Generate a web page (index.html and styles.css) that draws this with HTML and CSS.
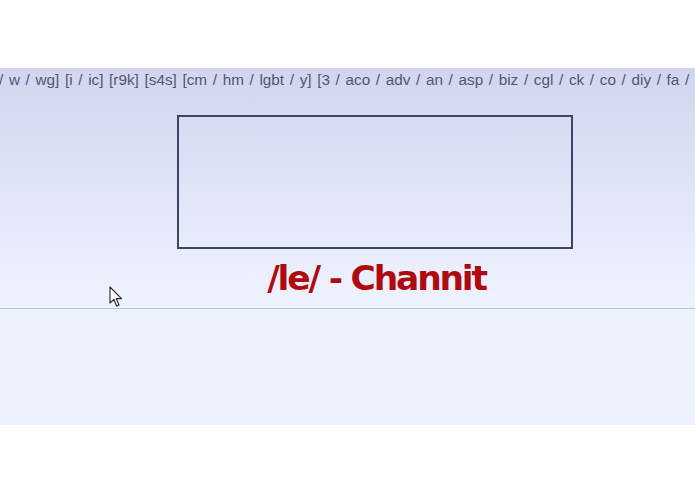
FILE: index.html
```html
<!DOCTYPE html>
<html>
<head>
<meta charset="utf-8">
<link rel="stylesheet" href="styles.css">
</head>
<body>
<div class="page">
  <div class="nav"><span class="navtext">/ w / wg] [i / ic] [r9k] [s4s] [cm / hm / lgbt / y] [3 / aco / adv / an / asp / biz / cgl / ck / co / diy / fa /</span></div>
  <div class="header">
    <div class="banner"></div>
    <div class="title">/le/ - Channit</div>
  </div>
  <div class="rule"></div>
  <svg class="cursor" width="14" height="22" viewBox="0 0 14 22">
    <path d="M1 1 L1 17 L4.8 13.4 L7.6 20 L10 19 L7.3 12.6 L12.5 12.6 Z" fill="#fff" stroke="#222" stroke-width="1.1" stroke-linejoin="round"/>
  </svg>
</div>
</body>
</html>
```
FILE: styles.css
```css
html, body {
  margin: 0;
  padding: 0;
  background: #ffffff;
}
.page {
  position: relative;
  margin-top: 68px;
  height: 357px;
  background: linear-gradient(to bottom, #d1d5ee 0px, #eef2ff 230px, #eef2ff 100%);
  overflow: hidden;
}
.nav {
  height: 24px;
  padding-top: 3px;
  white-space: nowrap;
  overflow: hidden;
  font-family: "Liberation Sans", Arial, sans-serif;
  font-size: 15.3px;
  word-spacing: 1.4px;
  line-height: 18px;
  color: #535870;
}
.navtext {
  display: inline-block;
  margin-left: -1px;
}
.header {
  display: flex;
  flex-direction: column;
  align-items: center;
  padding-top: 20px;
  padding-left: 54px;
}
.banner {
  width: 392px;
  height: 130px;
  border: 2px solid #3f4466;
}
.title {
  margin-top: 9px;
  font-family: "DejaVu Sans", Verdana, sans-serif;
  font-weight: bold;
  font-size: 34.5px;
  letter-spacing: -2.2px;
  line-height: 40px;
  color: #af0a0f;
  padding-left: 4px;
}
.rule {
  margin-top: 10px;
  height: 1px;
  border-top: 1px solid #b7c5d9;
}
.cursor {
  position: absolute;
  left: 109px;
  top: 218px;
}
```
